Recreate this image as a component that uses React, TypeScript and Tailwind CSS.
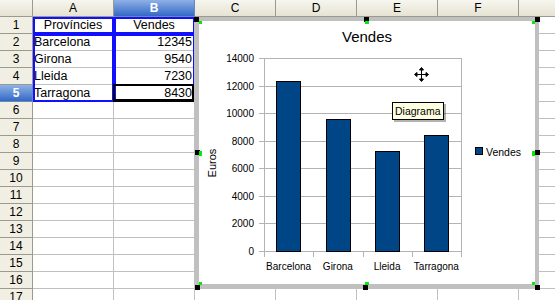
import React from "react";

const COLS = ["A", "B", "C", "D", "E", "F", "G"];
const ROWS = Array.from({ length: 17 }, (_, i) => i + 1);

const data: Record<number, [string, string]> = {
  1: ["Províncies", "Vendes"],
  2: ["Barcelona", "12345"],
  3: ["Girona", "9540"],
  4: ["Lleida", "7230"],
  5: ["Tarragona", "8430"],
};

const values = [
  { name: "Barcelona", v: 12345 },
  { name: "Girona", v: 9540 },
  { name: "Lleida", v: 7230 },
  { name: "Tarragona", v: 8430 },
];

function Chart() {
  const x0 = 264;
  const x1 = 461;
  const yBase = 251;
  const yTop = 58;
  const h = yBase - yTop;
  const cw = (x1 - x0) / 4;
  const ticks = [0, 2000, 4000, 6000, 8000, 10000, 12000, 14000];
  const font = "'Liberation Sans', Arial, sans-serif";
  return (
    <svg width={336} height={263} viewBox="199 21 336 263" className="block">
      <text x={367} y={42} fontSize={15} fontFamily={font} textAnchor="middle" fill="#000">
        Vendes
      </text>
      {ticks.map((t) => {
        const y = Math.round(yBase - (t / 14000) * h);
        return (
          <g key={t}>
            <line x1={259} x2={x1} y1={y + 0.5} y2={y + 0.5} stroke="#b3b3b3" strokeWidth={1} />
            <text x={254} y={y + 4} fontSize={10} fontFamily={font} textAnchor="end" fill="#000">
              {t}
            </text>
          </g>
        );
      })}
      <line x1={x0 + 0.5} x2={x0 + 0.5} y1={yTop} y2={257} stroke="#b3b3b3" />
      <line x1={x1 + 0.5} x2={x1 + 0.5} y1={yTop} y2={257} stroke="#b3b3b3" />
      {[1, 2, 3].map((i) => (
        <line
          key={i}
          x1={Math.round(x0 + cw * i) + 0.5}
          x2={Math.round(x0 + cw * i) + 0.5}
          y1={yBase}
          y2={257}
          stroke="#b3b3b3"
        />
      ))}
      {values.map((d, i) => {
        const bx = Math.round(x0 + cw * i + cw / 4);
        const by = Math.round(yBase - (d.v / 14000) * h);
        return (
          <g key={d.name}>
            <rect
              x={bx + 0.5}
              y={by + 0.5}
              width={24}
              height={yBase - by}
              fill="#004586"
              stroke="#000"
              strokeWidth={1}
            />
            <text
              x={x0 + cw * i + cw / 2}
              y={270}
              fontSize={10}
              fontFamily={font}
              textAnchor="middle"
              fill="#000"
            >
              {d.name}
            </text>
          </g>
        );
      })}
      <text
        x={216}
        y={163}
        transform="rotate(-90 216 163)"
        fontSize={11}
        fontFamily={font}
        textAnchor="middle"
        fill="#000"
      >
        Euros
      </text>
      <rect x={475.5} y={147.5} width={7} height={7} fill="#004586" stroke="#000" />
      <text x={486} y={156} fontSize={10.5} fontFamily={font} fill="#000">
        Vendes
      </text>
    </svg>
  );
}

function Handle({ bx, by, gx, gy, gw = 3, gh = 3 }: { bx: number; by: number; gx: number; gy: number; gw?: number; gh?: number }) {
  return (
    <>
      <div className="absolute bg-black" style={{ left: bx, top: by, width: 5, height: 5 }} />
      <div className="absolute bg-[#00ee00]" style={{ left: gx, top: gy, width: gw, height: gh }} />
    </>
  );
}

const headerCell =
  "w-[81px] shrink-0 border-r border-b border-[#9b9a8f] bg-linear-to-b from-[#f7f6ef] to-[#e6e3d3] flex items-center justify-center text-[12px] leading-none";
const headerSel =
  "w-[81px] shrink-0 border-r border-b border-[#6a87b8] bg-linear-to-b from-[#8fb1e6] to-[#3268c4] text-white font-bold flex items-center justify-center text-[12px] leading-none";

export default function App() {
  return (
    <div className="relative w-[555px] h-[300px] overflow-hidden bg-white font-['Liberation_Sans',Arial,sans-serif] text-black">
      {/* column header */}
      <div className="flex h-[17px]">
        <div className="w-[33px] shrink-0 border-r border-b border-[#9b9a8f] bg-linear-to-b from-[#f7f6ef] to-[#e6e3d3]" />
        {COLS.map((c) => (
          <div key={c} className={c === "B" ? headerSel : headerCell}>
            {c === "G" ? "" : c}
          </div>
        ))}
      </div>
      {ROWS.map((r) => (
        <div key={r} className="flex h-[17px]">
          <div
            className={
              r === 5
                ? "w-[33px] shrink-0 border-r border-b border-[#6a87b8] bg-linear-to-b from-[#8fb1e6] to-[#3268c4] text-white font-bold flex items-center justify-center text-[12px] leading-none"
                : "w-[33px] shrink-0 border-r border-b border-[#9b9a8f] bg-[#f1efe3] flex items-center justify-center text-[12px] leading-none"
            }
          >
            {r}
          </div>
          {COLS.map((c, ci) => {
            const d = data[r];
            const txt = d && ci < 2 ? d[ci] : "";
            const align = r === 1 ? "justify-center" : ci === 1 ? "justify-end pr-[2px]" : "justify-start pl-[1px]";
            return (
              <div
                key={c}
                className={`w-[81px] shrink-0 border-r border-b border-[#c0c0c0] flex items-center text-[12.5px] leading-none whitespace-nowrap overflow-hidden ${align}`}
              >
                {txt}
              </div>
            );
          })}
        </div>
      ))}

      {/* selection outlines */}
      <div className="absolute left-[33px] top-[17px] w-[81px] h-[17px] border-2 border-[#1010ff]" />
      <div className="absolute left-[33px] top-[34px] w-[81px] h-[68px] border-2 border-[#1010ff]" />
      <div className="absolute left-[114px] top-[17px] w-[81px] h-[17px] border-2 border-[#1010ff]" />
      <div className="absolute left-[114px] top-[34px] w-[81px] h-[68px] border-2 border-[#1010ff]" />
      <div className="absolute left-[113px] top-[84px] w-[82px] h-[18px] border-l-2 border-t-2 border-r-[3px] border-b-[3px] border-black" />

      {/* chart object */}
      <div className="absolute left-[194px] top-[17px] w-[345px] h-[272px] border-[#c0c0c0] border-l-[5px] border-t-[4px] border-r-[4px] border-b-[5px] bg-white">
        <Chart />
      </div>

      <Handle bx={194} by={17} gx={199} gy={21} />
      <Handle bx={364} by={17} gx={365} gy={21} gw={4} />
      <Handle bx={535} by={17} gx={532} gy={21} />
      <Handle bx={195} by={150} gx={199} gy={151} gh={5} />
      <Handle bx={535} by={150} gx={532} gy={151} gh={5} />
      <Handle bx={195} by={285} gx={199} gy={282} />
      <Handle bx={363} by={285} gx={365} gy={282} gw={4} />
      <Handle bx={535} by={285} gx={532} gy={282} />

      {/* move cursor */}
      <svg className="absolute left-[413px] top-[66px]" width={17} height={17} viewBox="0 0 17 17">
        <g stroke="#fff" strokeWidth={3} fill="#fff" strokeLinejoin="round">
          <line x1={8.5} y1={3} x2={8.5} y2={14} />
          <line x1={3} y1={8.5} x2={14} y2={8.5} />
          <path d="M8.5 1 L11 4 L6 4 Z M8.5 16 L11 13 L6 13 Z M1 8.5 L4 6 L4 11 Z M16 8.5 L13 6 L13 11 Z" />
        </g>
        <g stroke="#000" strokeWidth={1} fill="#000">
          <line x1={8.5} y1={3} x2={8.5} y2={14} />
          <line x1={3} y1={8.5} x2={14} y2={8.5} />
          <path d="M8.5 1.5 L10.5 4 L6.5 4 Z M8.5 15.5 L10.5 13 L6.5 13 Z M1.5 8.5 L4 6.5 L4 10.5 Z M15.5 8.5 L13 6.5 L13 10.5 Z" />
        </g>
      </svg>

      {/* tooltip */}
      <div className="absolute left-[392px] top-[102px] h-[18px] px-[2px] border border-black bg-[#ffffe1] shadow-[2px_2px_0_rgba(0,0,0,0.3)] flex items-center text-[10.5px] leading-none whitespace-nowrap">
        Diagrama
      </div>
    </div>
  );
}
